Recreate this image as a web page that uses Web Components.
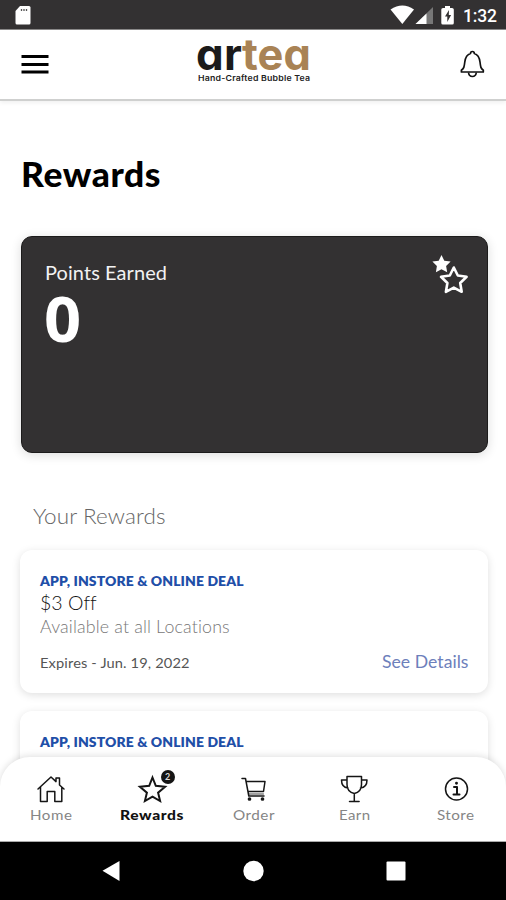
<!DOCTYPE html>
<html lang="en">
<head>
<meta charset="utf-8">
<title>Artea Rewards</title>
<style>
html,body{margin:0;padding:0;background:#fff}
body{width:506px;height:900px;overflow:hidden;font-family:Lato,"Liberation Sans",sans-serif}
</style>
</head>
<body>
<app-screen></app-screen>
<script>
function define(name, html, setup) {
  const template = document.createElement('template');
  template.innerHTML = html;
  customElements.define(name, class extends HTMLElement {
    connectedCallback() {
      if (this.shadowRoot) return;
      this.attachShadow({ mode: 'open' }).append(template.content.cloneNode(true));
      if (setup) setup(this, this.shadowRoot);
    }
  });
}

/* One line of text, tracked and slightly widened so that it spans the given width. */
define('text-line', `
<style>
:host{display:block;white-space:nowrap}
span{display:block;white-space:pre;width:max-content;transform-origin:0 0}
</style><span></span>`, (host, root) => {
  const span = root.querySelector('span');
  span.textContent = host.getAttribute('text');
  const width = parseFloat(host.getAttribute('width'));
  if (width) {
    const natural = span.getBoundingClientRect().width;
    const tracked = natural + (width - natural) * 0.3;
    const gap = (tracked - natural) / (span.textContent.length - 1);
    span.style.letterSpacing = gap + 'px';
    span.style.transform = 'scaleX(' + width / tracked + ')';
    host.style.width = width + 'px';
  }
});

define('status-bar', `
<style>
:host{display:flex;background:#333132;border-bottom:1px solid #8a8989;box-sizing:border-box;height:30px;color:#fff}
svg{display:block}
.row{display:flex;flex:1;justify-content:space-between}
text-line{font:500 18px/22px Roboto,sans-serif;margin:5px 0 0 9px}
.right{display:flex;padding-right:9px}
</style>
<div class="row">
<svg width="40" height="29" viewBox="0 0 40 29"><path d="M20 6h9q1.500 0 1.500 1.500v15.500q0 1.500-1.500 1.500H17q-1.500 0-1.500-1.500V11z" fill="#fff"/><path d="M21.500 9v2M24 9v2M26.500 9v2" stroke="#555" stroke-width="1.300"/></svg>
<div class="right">
<svg width="64" height="29" viewBox="390 0 64 29"><path d="M390.500 9.500Q402.500 1.500 414 9.500L402.300 24z" fill="#fff"/><path d="M433 7v17h-17.500z" fill="#777"/><path d="M426.500 13.500V24h-11z" fill="#fff"/><path d="M443 8h2V6h5v2h2q1.800 0 1.800 1.500v13.500q0 1.500-1.500 1.500h-9.500q-1.500 0-1.500-1.500V9.500Q441.300 8 443 8z" fill="#fff"/><path d="M449 10l-4 6.500h2.300V22l3.800-7h-2.300z" fill="#333132"/></svg>
<text-line text="1:32" width="34"></text-line>
</div></div>`);

define('app-header', `
<style>
:host{display:flex;justify-content:space-between;height:71px;box-sizing:border-box;background:#fff;border-bottom:2px solid #cfd0cf;box-shadow:0 2px 4px rgba(0,0,0,.06);position:relative}
svg{display:block}
.logo{width:120px;margin-left:5.5px}
.name{display:flex;font:700 43px/40px Inter,sans-serif;font-feature-settings:"cv11";color:#1b1b1b;padding-top:4px}
.tea{color:#a98355}
.sub{font:600 8px/9px Inter,sans-serif;color:#222;margin:0 0 0 2px}
</style>
<svg width="70" height="69" viewBox="0 30 70 69"><path d="M21.500 56.500h27M21.500 64.500h27M21.500 72h27" stroke="#000" stroke-width="2.800"/></svg>
<div class="logo"><div class="name"><text-line text="ar" width="46"></text-line><text-line class="tea" text="tea" width="69"></text-line></div><text-line class="sub" text="Hand-Crafted Bubble Tea" width="112"></text-line></div>
<svg width="70" height="69" viewBox="436 30 70 69" fill="none" stroke="#111" stroke-width="1.700" stroke-linejoin="round"><path d="M470.500 53.500q0-2 1.900-2t1.900 2c4.200 1.200 5.200 4.500 5.700 8.500 .6 5 .8 6.500 3.300 8.300v1.700h-21.900v-1.700c2.500-1.800 2.800-3.300 3.400-8.300 .5-4 1.500-7.300 5.700-8.500z"/><path d="M468.500 72.500q.5 4 3.900 4t3.900-4"/></svg>`);

define('points-card', `
<style>
:host{display:flex;flex-shrink:0;justify-content:space-between;box-sizing:border-box;width:467px;height:217px;background:#333132;border:1px solid #1c1b1b;border-radius:11px;padding:24.5px 17.5px 0 23px;color:#fff;box-shadow:0 2px 11px rgba(0,0,0,.14)}
.label{font-size:19.500px;line-height:24px;color:#f2f2f2}
.value{font:700 62px/62px "Open Sans",sans-serif;margin:2px 0 0 -1px}
svg{display:block;margin-top:-7px}
</style>
<div><text-line class="label" text="Points Earned" width="122"></text-line><text-line class="value" text="0" width="38"></text-line></div>
<svg width="38" height="42" viewBox="431 254 38 42"><path d="M441.500 255l2.800 5.700 6.300.9-4.500 4.400 1.100 6.200-5.700-3-5.600 3 1-6.200-4.500-4.400 6.300-.9z" fill="#fff"/><path d="M453.800 267.500l4 8 8.800 1.300-6.400 6.200 1.500 8.800-7.900-4.200-7.900 4.200 1.500-8.800-6.400-6.200 8.800-1.300z" fill="#333132" stroke="#fff" stroke-width="2.600" stroke-linejoin="round"/></svg>`);

define('reward-card', `
<style>
:host{display:block;box-sizing:border-box;width:468px;height:143px;background:#fff;border-radius:12px;padding:23.4px 20px 0;box-shadow:0 2px 9px rgba(0,0,0,.13)}
:host([peek]) .details{display:none}
.kind{font-weight:800;font-size:13.500px;line-height:16px;color:#1f4fa8}
.name{font-weight:300;font-size:19.500px;line-height:22px;color:#111;margin-top:2.500px}
.place{font-weight:300;font-size:17px;line-height:20px;color:#777;margin-top:3px}
.row{display:flex;justify-content:space-between;align-items:baseline;margin-top:15.500px}
.exp{font-size:14px;line-height:18px;color:#555}
.more{font-size:17.500px;line-height:20px;color:#6d80bb}
</style>
<text-line class="kind" text="APP, INSTORE &amp; ONLINE DEAL" width="203.500"></text-line>
<div class="details"><text-line class="name" text="$3 Off" width="56"></text-line>
<text-line class="place" text="Available at all Locations" width="190"></text-line>
<div class="row"><text-line class="exp" text="Expires - Jun. 19, 2022" width="149.500"></text-line><text-line class="more" text="See Details" width="86.500"></text-line></div></div>`);

define('tab-item', `
<style>
:host{display:flex;flex-direction:column;align-items:center;width:101.2px;padding:10px 0 0 .6px;box-sizing:border-box;font-size:13.800px;line-height:16px;color:#858585}
:host([active]){font-weight:900;color:#111}
text-line{margin-top:-2px}
</style><slot></slot><text-line></text-line>`, (host, root) => {
  const line = document.createElement('text-line');
  line.setAttribute('text', host.getAttribute('label'));
  line.setAttribute('width', host.getAttribute('text-width'));
  root.querySelector('text-line').replaceWith(line);
});

define('tab-bar', `
<style>
:host{display:flex;box-sizing:border-box;height:85px;margin-top:-85px;background:#fff;border-radius:30px 30px 0 0;box-shadow:0 -1px 7px rgba(0,0,0,.13);position:relative;border-bottom:1px solid #aaa}
svg{display:block;fill:none;stroke:#151515;stroke-width:1.500;stroke-linejoin:round;stroke-linecap:round}
.icon{position:relative}
.badge{position:absolute;left:28.5px;top:3px;width:14px;height:14px;border-radius:50%;background:#151515;color:#ddd;display:flex;justify-content:center;font:700 9px/14px Lato,sans-serif}
</style>
<tab-item label="Home" text-width="42"><svg width="40" height="42" viewBox="31 767 40 42"><path d="M38 789l13-12 5 4.600V778h3.500v7l4.500 4M40.500 787v14.500h6.700v-10h7.600v10h7V787"/></svg></tab-item>
<tab-item active label="Rewards" text-width="63.500"><div class="icon"><svg width="40" height="42" viewBox="132 767 40 42"><path d="M152.500 777.500l3.300 8.300 9.300.9-7 6 2 8.300-7.600-4.400-7.600 4.400 2-8.300-7-6 9.300-.9z" stroke-width="2" stroke-linejoin="miter"/></svg><text-line class="badge" text="2"></text-line></div></tab-item>
<tab-item label="Order" text-width="41.500"><svg width="40" height="42" viewBox="233 767 40 42"><path d="M242 778.500h3.500l3.300 17.500h15.200M246.500 781.500h18.500l-1.500 10h-15.300"/><path d="M248.500 794h15" stroke-width=".8"/><circle cx="249.500" cy="799" r="1.100" fill="#151515"/><circle cx="262.500" cy="799" r="1.100" fill="#151515"/></svg></tab-item>
<tab-item label="Earn" text-width="31"><svg width="40" height="42" viewBox="334.5 767 40 42"><path d="M347.500 776.500h14.500v8c0 5-3 8-7.200 9-4.300-1-7.300-4-7.300-9zM347.500 780h-5.500c0 4.500 2 7.500 6.500 8M362 780h5.500c0 4.500-2 7.500-6.500 8M354.800 793.500v8M350 801.500h9.600"/></svg></tab-item>
<tab-item label="Store" text-width="37"><svg width="40" height="42" viewBox="436 767 40 42"><circle cx="456.500" cy="789" r="11"/><path d="M454 787h3v7.500M453.500 794.500h6" stroke-width="2"/><circle cx="456.500" cy="783.300" r=".7" fill="#151515"/></svg></tab-item>`);

define('system-nav', `
<style>:host{display:block;height:58px;background:#000}svg{display:block}</style>
<svg width="506" height="58" viewBox="0 842 506 58" fill="#fff"><path d="M102.500 870.800L119.500 861v20z"/><circle cx="253.500" cy="871" r="10.200"/><rect x="386.500" y="861.500" width="19" height="19" rx="1"/></svg>`);

define('app-screen', `
<style>
:host{display:flex;flex-direction:column;width:506px;height:900px;background:#fff}
main{flex:1;min-height:0;overflow:hidden;display:flex;flex-direction:column;padding:53px 0 0 20px}
.title{font-size:33.500px;line-height:40px;font-weight:900;color:#000;padding-left:.5px}
points-card{margin:41.5px 0 0 .5px}
.section{font-size:22px;line-height:26px;font-weight:300;color:#666;margin:50px 0 0 12.5px}
.list{display:flex;flex-direction:column;gap:18px;margin-top:21.500px}
</style>
<status-bar></status-bar>
<app-header></app-header>
<main>
<text-line class="title" text="Rewards" width="139.500"></text-line>
<points-card></points-card>
<text-line class="section" text="Your Rewards" width="132.500"></text-line>
<div class="list"><reward-card></reward-card><reward-card peek></reward-card></div>
</main>
<tab-bar></tab-bar>
<system-nav></system-nav>`);
</script>
</body>
</html>
